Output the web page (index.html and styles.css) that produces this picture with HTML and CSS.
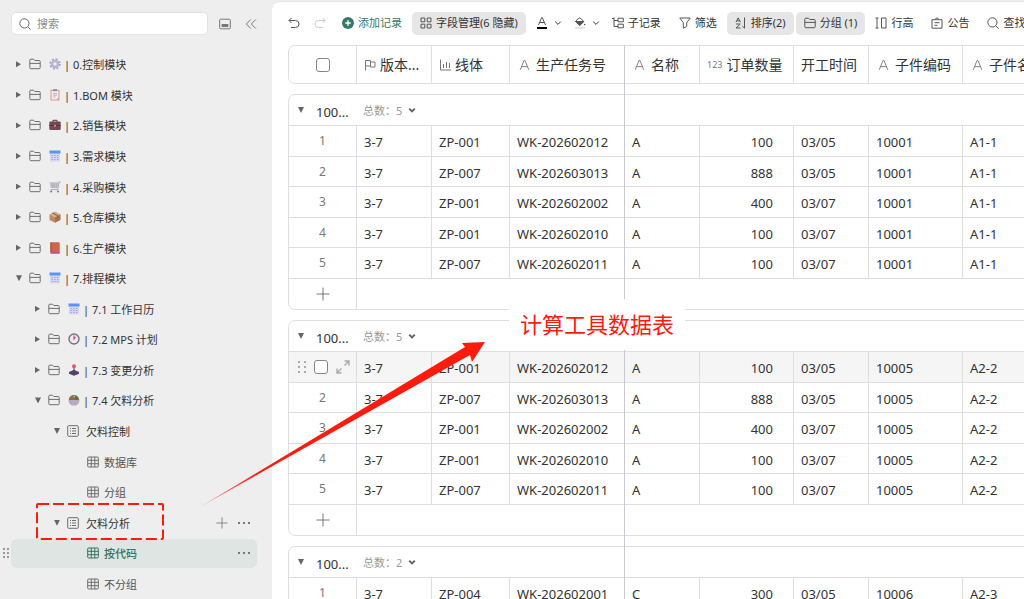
FILE: index.html
```html
<!DOCTYPE html>
<html lang="zh-CN">

<head>
    <meta charset="UTF-8">
    <title>欠料分析</title>
    <link rel="stylesheet" href="styles.css">
</head>

<body>

    <svg class="sprite" aria-hidden="true">
        <symbol id="i-search" viewBox="0 0 12 12"><circle cx="5.4" cy="5.4" r="4.6" /><path d="M8.800 8.800l2.800 2.800" /></symbol>
        <symbol id="i-folder" viewBox="0 0 12 12"><path d="M.8 9.700V2.200a1 1 0 0 1 1-1h2.700l1.300 1.300h4.400a1 1 0 0 1 1 1v6.200a1 1 0 0 1-1 1H1.800a1 1 0 0 1-1-1zM.8 5.400h10.400" /></symbol>
        <symbol id="i-list" viewBox="0 0 12 12"><rect x=".7" y=".7" width="10.6" height="10.6" rx="1" /><path d="M3 3.5h1M5 3.5h4M3 6h1M5 6h4M3 8.5h1M5 8.5h4" /></symbol>
        <symbol id="i-table" viewBox="0 0 12 12"><rect x=".7" y="1" width="10.6" height="10" rx="1" /><path d="M4.3 1v10M.7 4.3h10.6M.7 7.7h10.6M7.8 1v10" /></symbol>
        <symbol id="i-chevron" viewBox="0 0 8 8"><path d="M1.2 2.6L4 5.4l2.8-2.8" /></symbol>
        <symbol id="i-plus" viewBox="0 0 14 14"><path d="M7 .5v13M.5 7h13" /></symbol>
        <symbol id="i-text" viewBox="0 0 12 12"><path d="M1.3 11.3L5.5 1h1l4.2 10.3M2.8 7.8h6.4" /></symbol>
        <symbol id="i-calendar" viewBox="0 0 12 12"><path d="M1 3h10v8.500H1z" fill="#d9d6f1" stroke="none" /><path d="M.5.500h11v3H.5z" fill="#5b96ee" stroke="none" /><path d="M2.500 5.500h7M2.500 7.500h7M2.500 9.500h7" stroke="#9298cf" stroke-dasharray="1.200 1.600" /></symbol>
    </svg>

    <aside class="sidebar">
        <div class="sidebar-top">
            <label class="search">
                <svg class="icon"><use href="#i-search" /></svg>
                <input type="search" placeholder="搜索" aria-label="搜索">
            </label>
            <button class="plain" aria-label="面板">
                <svg class="icon" viewBox="0 0 12 12"><rect x=".7" y="1.2" width="10.6" height="9.6" rx="1" /><path d="M3 6.500h6v2H3z" fill="currentColor" /></svg>
            </button>
            <button class="plain collapse" aria-label="收起">
                <svg class="icon" viewBox="0 0 12 12"><path d="M5.800 1.500L1.300 6l4.500 4.500M10.800 1.500L6.300 6l4.500 4.500" /></svg>
            </button>
        </div>

        <ul class="tree">
            <li><a class="node" href="#"><i class="arrow"></i><svg class="icon"><use href="#i-folder" /></svg>
                <svg class="emoji" viewBox="0 0 12 12"><circle cx="6" cy="6" r="4.7" stroke="#aaa1c5" stroke-width="2" stroke-dasharray="2 1.7" /><circle cx="6" cy="6" r="3" stroke="#b9b1d3" stroke-width="2.4" /></svg>| 0.控制模块</a></li>
            <li><a class="node" href="#"><i class="arrow"></i><svg class="icon"><use href="#i-folder" /></svg>
                <svg class="emoji" viewBox="0 0 12 12"><path d="M1.5.8h9v10.7h-9z" fill="#d9a583" /><path d="M2.6 2h6.8v6.5L7.4 10.5H2.6z" fill="#f2edf7" /><path d="M4 .2h4v2H4z" fill="#8f87a5" /><path d="M4 4.5h4M4 6.2h4M4 8h2.5" stroke="#aaa2bc" stroke-width=".8" /></svg>| 1.BOM 模块</a></li>
            <li><a class="node" href="#"><i class="arrow"></i><svg class="icon"><use href="#i-folder" /></svg>
                <svg class="emoji" viewBox="0 0 12 12"><path d="M4 3V1.3h4V3" stroke="#4f3540" /><rect x=".3" y="2.6" width="11.4" height="8.4" rx="1" fill="#744753" /><path d="M.3 6.5h11.4" stroke="#573440" /><path d="M5 5.7h2v2H5z" fill="#d28a55" /></svg>| 2.销售模块</a></li>
            <li><a class="node" href="#"><i class="arrow"></i><svg class="icon"><use href="#i-folder" /></svg>
                <svg class="emoji"><use href="#i-calendar" /></svg>| 3.需求模块</a></li>
            <li><a class="node" href="#"><i class="arrow"></i><svg class="icon"><use href="#i-folder" /></svg>
                <svg class="emoji" viewBox="0 0 12 12"><path d="M11.8 1H10L8.8 8.6H1.5M.5 2h9M.9 4h8.4M1.3 6h7.7M2.8 2l.5 5M5 2v5M7.3 2L7 7" stroke="#9c9aa8" stroke-width=".8" /><circle cx="2.2" cy="10.5" r="1" fill="#6270ac" /><circle cx="9" cy="10.5" r="1" fill="#6270ac" /></svg>| 4.采购模块</a></li>
            <li><a class="node" href="#"><i class="arrow"></i><svg class="icon"><use href="#i-folder" /></svg>
                <svg class="emoji" viewBox="0 0 12 12"><path d="M6 .5l5.5 2.8L6 6.2.5 3.3z" fill="#d7ad83" /><path d="M.5 3.3L6 6.2v5.6L.5 9z" fill="#bf8c62" /><path d="M11.5 3.3L6 6.2v5.6L11.5 9z" fill="#a67150" /><path d="M3.3 1.9l5.5 2.8V7" stroke="#7f5948" /></svg>| 5.仓库模块</a></li>
            <li><a class="node" href="#"><i class="arrow"></i><svg class="icon"><use href="#i-folder" /></svg>
                <svg class="emoji" viewBox="0 0 12 12"><rect x="1.3" y=".3" width="9.4" height="11.4" rx=".8" fill="#cd6546" /><path d="M2 .3v10" stroke="#a74a43" /><path d="M2 10.7h8.7" stroke="#a95b8e" stroke-width="1.2" /></svg>| 6.生产模块</a></li>
            <li><a class="node" href="#"><i class="arrow open"></i><svg class="icon"><use href="#i-folder" /></svg>
                <svg class="emoji"><use href="#i-calendar" /></svg>| 7.排程模块</a></li>
            <li><a class="node level-2" href="#"><i class="arrow"></i><svg class="icon"><use href="#i-folder" /></svg>
                <svg class="emoji"><use href="#i-calendar" /></svg>| 7.1 工作日历</a></li>
            <li><a class="node level-2" href="#"><i class="arrow"></i><svg class="icon"><use href="#i-folder" /></svg>
                <svg class="emoji" viewBox="0 0 12 12"><circle cx="6" cy="6" r="5" fill="#eee9f1" stroke="#77707f" stroke-width="1.4" /><path d="M6 2.5V6l1.5-1.8" stroke="#d2455b" stroke-width="1.1" /></svg>| 7.2 MPS 计划</a></li>
            <li><a class="node level-2" href="#"><i class="arrow"></i><svg class="icon"><use href="#i-folder" /></svg>
                <svg class="emoji" viewBox="0 0 12 12"><path d="M6 3v4" stroke="#6d6280" stroke-width="1.3" /><circle cx="6" cy="2.2" r="2" fill="#e0586b" /><path d="M1 8l5-2.3L11 8v1.8l-5 2-5-2z" fill="#51426c" /></svg>| 7.3 变更分析</a></li>
            <li><a class="node level-2" href="#"><i class="arrow open"></i><svg class="icon"><use href="#i-folder" /></svg>
                <svg class="emoji" viewBox="0 0 12 12"><path d="M.8 6a5.2 5 0 0 1 10.4 0z" fill="#61814c" /><circle cx="4" cy="4" r="1.3" fill="#cc554e" /><circle cx="8.2" cy="4.3" r="1.2" fill="#8d4c44" /><circle cx="6.2" cy="2.7" r="1" fill="#a0b85d" /><path d="M.5 6h11c0 3.5-2 5.5-5.5 5.5S.5 9.5.5 6z" fill="#b5abc2" /></svg>| 7.4 欠料分析</a></li>
            <li><a class="node level-3" href="#"><i class="arrow open"></i><svg class="icon"><use href="#i-list" /></svg>欠料控制</a></li>
            <li><a class="node level-4" href="#"><svg class="icon"><use href="#i-table" /></svg>数据库</a></li>
            <li><a class="node level-4" href="#"><svg class="icon"><use href="#i-table" /></svg>分组</a></li>
            <li>
                <a class="node level-3" href="#"><i class="arrow open"></i><svg class="icon"><use href="#i-list" /></svg>欠料分析</a>
                <button class="plain" aria-label="新增"><svg class="icon"><use href="#i-plus" /></svg></button>
                <button class="plain more" aria-label="更多"><i class="dots"></i></button>
                <svg class="marker"><rect x="1" y="1" width="126" height="35" rx="1" /></svg>
            </li>
            <li class="selected">
                <svg class="grip" viewBox="0 0 6 10"><path d="M0 1h2M0 5h2M0 9h2M4 1h2M4 5h2M4 9h2" /></svg>
                <a class="node level-4" href="#"><svg class="icon"><use href="#i-table" /></svg>按代码</a>
                <button class="plain more" aria-label="更多"><i class="dots"></i></button>
            </li>
            <li><a class="node level-4" href="#"><svg class="icon"><use href="#i-table" /></svg>不分组</a></li>
        </ul>
    </aside>

    <main class="workspace">
        <div class="toolbar">
            <button class="tool icon-only" aria-label="撤销"><svg class="icon" viewBox="0 0 12 12"><path d="M3.5 1L1 3.5 3.5 6M1 3.5h6.5a3.5 3.5 0 0 1 0 7H3" /></svg></button>
            <button class="tool icon-only" aria-label="重做" disabled><svg class="icon" viewBox="0 0 12 12"><path d="M8.5 1L11 3.5 8.5 6M11 3.5H4.5a3.5 3.5 0 0 0 0 7H9" /></svg></button>
            <button class="tool add"><svg class="icon" viewBox="0 0 12 12"><circle cx="6" cy="6" r="6" fill="#39796a" stroke="none" /><path d="M6 3.3v5.4M3.3 6h5.4" stroke="#fff" stroke-width="1.4" /></svg>添加记录</button>
            <button class="tool active"><svg class="icon" viewBox="0 0 12 12"><path d="M1 1h3.8v3.8H1zM7.2 1H11v3.8H7.200zM1 7.200h3.800V11H1zM7.200 7.200H11V11H7.200z" /></svg>字段管理(6 隐藏)</button>
            <button class="tool color" aria-label="文字颜色"><svg class="icon" viewBox="0 0 12 12"><path d="M2.5 8L5.7.5h.6L9.5 8M3.7 5.5h4.6" /><path d="M1 11h10" stroke="#000" stroke-width="2" /></svg><svg class="chevron"><use href="#i-chevron" /></svg></button>
            <button class="tool color" aria-label="填充颜色"><svg class="icon" viewBox="0 0 12 12"><path d="M3.5 2.300L6 .7l3.800 3.800L5.700 8.400 1.500 4.500z" /><path d="M1.500 4.500h8.300L5.700 8.400z" fill="currentColor" /><circle cx="10.700" cy="7.500" r=".8" fill="currentColor" stroke="none" /><path d="M1 11h10" stroke="#ddd" stroke-width="1.600" /></svg><svg class="chevron"><use href="#i-chevron" /></svg></button>
            <button class="tool"><svg class="icon" viewBox="0 0 12 12"><path d="M0 1.500h2M2 .5v9h4M2 3.500h4M6 1.200h5.300v3.600H6zM6 7.200h5.300v3.600H6z" /></svg>子记录</button>
            <button class="tool"><svg class="icon" viewBox="0 0 12 12"><path d="M.8 1h10.400L7.700 5.800v3.700l-3.400 1.700V5.800z" /></svg>筛选</button>
            <button class="tool active"><svg class="icon" viewBox="0 0 12 12"><path d="M1 5.200L3.200.8l2.200 4.400M1.800 3.800h2.800M1 7h4.200L1 11h4.500M9.500.5v10.700L7.300 9" /></svg>排序(2)</button>
            <button class="tool active"><svg class="icon"><use href="#i-folder" /></svg>分组 (1)</button>
            <button class="tool"><svg class="icon" viewBox="0 0 12 12"><path d="M.5 1h3M.5 11h3M2 1v10M6.500 1h4.500v10H6.500z" /></svg>行高</button>
            <button class="tool"><svg class="icon" viewBox="0 0 12 12"><path d="M1 2.700h10v8.500H1zM4 2.500L6 .7l2 1.800M3.500 5.700h5M3.500 8.300h3" /></svg>公告</button>
            <button class="tool"><svg class="icon"><use href="#i-search" /></svg>查找</button>
        </div>

        <div class="sheet">
            <div class="group">
                <table class="grid head">
                    <thead>
                        <tr>
                            <th class="index"><input type="checkbox" aria-label="全选"></th>
                            <th class="w-75"><span><svg class="icon" viewBox="0 0 12 12"><path d="M1.500 11.500V1.500h5v5.500h-5M6.500 3h4.500v5H6.500V7" /></svg>版本...</span></th>
                            <th class="w-78"><span><svg class="icon" viewBox="0 0 12 12"><path d="M1.500.5v10.500H12M4.500 5v4M7.500 3v6M10.500 4v5" /></svg>线体</span></th>
                            <th class="w-115"><span class="text-type"><svg class="icon"><use href="#i-text" /></svg>生产任务号</span></th>
                            <th class="w-75"><span class="text-type"><svg class="icon"><use href="#i-text" /></svg>名称</span></th>
                            <th class="w-94"><span><small>123</small>订单数量</span></th>
                            <th class="w-75"><span>开工时间</span></th>
                            <th class="w-94"><span class="text-type"><svg class="icon"><use href="#i-text" /></svg>子件编码</span></th>
                            <th class="w-94"><span class="text-type"><svg class="icon"><use href="#i-text" /></svg>子件名称</span></th>
                        </tr>
                    </thead>
                </table>
            </div>
            <div class="frozen-line"></div>
        </div>

        <p class="note">计算工具数据表</p>
    </main>

    <svg class="pointer" viewBox="0 0 286 166" aria-hidden="true">
        <defs>
            <linearGradient id="fade"><stop offset="0" stop-color="#fd1b0d" stop-opacity=".4" /><stop offset=".2" stop-color="#fd1b0d" /></linearGradient>
        </defs>
        <path d="M0 165L265 5l-3-4 23-1-13 20-2-7z" fill="url(#fade)" />
    </svg>

    <template class="group-template">
        <section class="group">
            <div class="group-title">
                <button class="plain toggle" aria-label="折叠分组"><i class="arrow open"></i></button>
                <span class="group-name">100...</span>
                <button class="plain total"><span></span><svg class="chevron"><use href="#i-chevron" /></svg></button>
            </div>
            <table class="grid">
                <tbody></tbody>
            </table>
        </section>
    </template>

    <template class="row-template">
        <tr>
            <td class="index"></td>
            <td class="w-75"></td>
            <td class="w-78"></td>
            <td class="w-115"></td>
            <td class="w-75"></td>
            <td class="w-94 number"></td>
            <td class="w-75"></td>
            <td class="w-94"></td>
            <td class="w-94"></td>
        </tr>
    </template>

    <template class="hover-template">
        <div class="row-tools">
            <svg viewBox="0 0 8 14"><path d="M0 2h2M0 7h2M0 12h2M6 2h2M6 7h2M6 12h2" stroke-width="2" /></svg>
            <input type="checkbox" aria-label="选择记录">
            <svg viewBox="0 0 14 14"><path d="M8.5 1H13v4.5M13 1L8.5 5.5M5.5 13H1V8.5M1 13l4.5-4.5" stroke-width="1.4" /></svg>
        </div>
    </template>

    <template class="add-template">
        <tr class="add-row">
            <td class="index"><button class="plain" aria-label="添加记录"><svg class="icon"><use href="#i-plus" /></svg></button></td>
            <td colspan="8"></td>
        </tr>
    </template>

    <script>
        const orders = [
            ["ZP-001", "WK-202602012", "A", 100, "03/05"],
            ["ZP-007", "WK-202603013", "A", 888, "03/05"],
            ["ZP-001", "WK-202602002", "A", 400, "03/07"],
            ["ZP-001", "WK-202602010", "A", 100, "03/07"],
            ["ZP-007", "WK-202602011", "A", 100, "03/07"]
        ];
        const groups = [
            { code: "10001", part: "A1-1", total: 5, rows: orders },
            { code: "10005", part: "A2-2", total: 5, rows: orders, hover: 0 },
            { code: "10006", part: "A2-3", total: 2, rows: [["ZP-004", "WK-202602001", "C", 300, "03/05"]] }
        ];

        function clone(name) {
            return document.querySelector(name).content.cloneNode(true);
        }

        function showGroups() {
            const sheet = document.querySelector(".sheet");
            groups.forEach(group => {
                const section = clone(".group-template");
                const body = section.querySelector("tbody");
                section.querySelector(".total span").textContent = "总数：" + group.total;
                group.rows.forEach((order, i) => {
                    const row = clone(".row-template");
                    const values = [i + 1, "3-7", ...order, group.code, group.part];
                    row.querySelectorAll("td").forEach((cell, n) => cell.textContent = values[n]);
                    if (group.hover === i) {
                        row.querySelector("tr").classList.add("hover");
                        row.querySelector(".index").replaceChildren(clone(".hover-template"));
                    }
                    body.appendChild(row);
                });
                // only fully loaded groups end with the add row
                if (group.rows.length === group.total) {
                    body.appendChild(clone(".add-template"));
                }
                sheet.appendChild(section);
            });
        }

        showGroups();
    </script>

</body>

</html>
```

FILE: styles.css
```css
* {
    box-sizing: border-box;
}

body {
    margin: 0;
    height: 100vh;
    display: flex;
    overflow: hidden;
    background-color: #eeeeee;
    color: #333;
    font-family: "Noto Sans", "Noto Sans CJK SC", sans-serif;
    font-size: 11px;
}

button,
input {
    font: inherit;
    color: inherit;
}

svg {
    flex: none;
    fill: none;
    stroke: currentColor;
}

.sprite {
    position: absolute;
    width: 0;
    height: 0;
}

.icon {
    width: 12px;
    height: 12px;
    display: block;
}

.chevron {
    width: 8px;
    height: 8px;
}

.plain {
    padding: 0;
    border: 0;
    background: none;
    color: #777;
}

/* sidebar */

.sidebar {
    flex: none;
    width: 272px;
    display: flex;
    flex-direction: column;
}

.sidebar-top {
    display: flex;
    align-items: center;
    padding: 12px 15px 14px 11px;
}

.search {
    flex: 1;
    display: flex;
    align-items: center;
    gap: 6px;
    height: 23px;
    margin-right: 11px;
    padding: 0 7px;
    border: 1px solid #e3e3e3;
    border-radius: 5px;
    background-color: white;
    color: #666;
}

.search input {
    width: 100%;
    min-width: 0;
    padding: 0;
    border: 0;
    outline: 0;
    background: none;
}

.search input::placeholder {
    color: #8b8b8b;
}

.collapse {
    margin-left: 14px;
}

.tree {
    flex: 1;
    display: flex;
    flex-direction: column;
    margin: 0;
    padding: 0;
    list-style: none;
}

.tree li {
    flex: 1;
    position: relative;
    display: flex;
    align-items: center;
    margin: 0 15px 0 11px;
    padding-right: 7px;
    border: solid transparent;
    border-width: 1px 0;
    border-radius: 6px;
    background-clip: padding-box;
}

.tree .selected {
    background-color: #dee5e2;
}

.node {
    flex: 1;
    display: flex;
    align-items: center;
    padding-left: 4px;
    color: #333;
    text-decoration: none;
    white-space: nowrap;
}

.node .icon {
    margin-right: 8px;
    color: #6e6e6e;
}

.emoji {
    width: 12px;
    height: 12px;
    margin-right: 3px;
    stroke: none;
}

.level-2 {
    padding-left: 23px;
}

.level-3 {
    padding-left: 42px;
}

.level-4 {
    padding-left: 76px;
    color: #555;
}

.level-3 .icon {
    margin-right: 7px;
}

.level-4 .icon {
    margin-right: 5px;
}

.selected .node,
.selected .node .icon {
    color: #35735f;
}

.selected .node {
    font-weight: 500;
}

.arrow {
    flex: none;
    width: 8px;
    height: 6px;
    margin-right: 6px;
    background-color: #666;
    clip-path: polygon(1px 0, 6px 3px, 1px 6px);
}

.arrow.open {
    clip-path: polygon(1px 0, 7px 0, 4px 6px);
}

.more {
    margin-left: 10px;
}

.dots {
    display: block;
    width: 12px;
    height: 2px;
    background: repeating-linear-gradient(to right, #777 0 2px, transparent 2px 5px);
}

.grip {
    position: absolute;
    left: -8px;
    width: 6px;
    height: 10px;
    stroke: #999;
    stroke-width: 2;
}

.marker {
    position: absolute;
    left: 25px;
    top: -5px;
    width: 128px;
    height: 37px;
    z-index: 1;
    stroke: #fd1b0d;
    stroke-width: 2;
    stroke-dasharray: 11 4;
    pointer-events: none;
}

/* workspace */

.workspace {
    flex: 1;
    min-width: 0;
    position: relative;
    overflow: hidden;
    margin-top: 1px;
    padding-left: 16px;
    border-top: 1px solid #e6e6e6;
    border-top-left-radius: 8px;
    background-color: white;
}

.toolbar {
    display: flex;
    align-items: center;
    gap: 2px;
    height: 43px;
    margin-left: -6px;
    padding-bottom: 1px;
}

.tool {
    flex: none;
    display: flex;
    align-items: center;
    gap: 4px;
    height: 23px;
    padding: 0 8px;
    border: 0;
    border-radius: 5px;
    background: none;
    line-height: 14px;
    white-space: nowrap;
}

.tool .icon {
    color: #555;
}

.icon-only {
    padding: 0 6px;
}

.tool:disabled .icon {
    color: #ccc;
}

.add {
    color: #39796a;
}

.active {
    background-color: #e6e6e6;
}

.color {
    gap: 6px;
    padding: 0 2px 0 8px;
}

.sheet {
    position: relative;
    height: 100%;
    display: flex;
    flex-direction: column;
    gap: 10px;
}

.group {
    flex: none;
    width: max-content;
    overflow: hidden;
    border: 1px solid #dedede;
    border-radius: 7px;
}

.group-title {
    display: flex;
    align-items: center;
    height: 31px;
    padding-left: 8px;
    border-bottom: 1px solid #dedede;
}

.group-name {
    width: 47px;
    padding-top: 3px;
    font-size: 13px;
}

.toggle {
    margin-right: 11px;
}

.toggle .arrow {
    display: block;
    margin-right: 0;
}

.total {
    display: flex;
    align-items: center;
    gap: 6px;
    color: #999;
}

.total .chevron {
    color: #666;
    stroke-width: 2;
}

.grid {
    table-layout: fixed;
    width: 768px;
    border-spacing: 0;
    font-size: 13px;
}

.grid td,
.grid th {
    height: 31px;
    padding: 2px 7px 0;
    border-right: 1px solid #dedede;
    border-bottom: 1px solid #dedede;
    line-height: 20px;
    text-align: left;
    font-weight: 400;
    white-space: nowrap;
}

.grid tr:nth-child(even) td {
    height: 30px;
}

.grid .index {
    width: 68px;
    padding: 0;
    text-align: center;
    font-size: 12px;
    color: #777;
}

.w-75 {
    width: 75px;
}

.w-78 {
    width: 78px;
}

.w-94 {
    width: 94px;
}

.w-115 {
    width: 115px;
}

.grid .number {
    padding-right: 20px;
    text-align: right;
}

.grid .hover td {
    background-color: #f5f5f5;
}

.grid .add-row td {
    height: 30px;
    border-bottom: 0;
}

.add-row .plain {
    display: block;
    margin: auto;
}

.add-row .icon {
    width: 14px;
    height: 14px;
}

.grid.head th {
    height: 37px;
    padding-top: 0;
    border-bottom: 0;
    font-size: 14px;
}

.head span {
    display: flex;
    align-items: center;
    gap: 4px;
}

.head .text-type {
    gap: 6px;
    padding-left: 2px;
}

.head .text-type .icon {
    width: 11px;
}

.head .icon,
.head small {
    color: #777;
}

.head small {
    font-size: 9px;
}

input[type="checkbox"] {
    appearance: none;
    display: block;
    width: 14px;
    height: 14px;
    margin: auto;
    border: 1px solid #858585;
    border-radius: 3px;
    background-color: white;
}

.row-tools {
    display: flex;
    align-items: center;
    justify-content: space-between;
    padding: 0 6px 0 9px;
    color: #aaa;
}

.row-tools svg {
    width: 14px;
    height: 14px;
}

.row-tools svg:first-child {
    width: 8px;
}

.frozen-line {
    position: absolute;
    top: 0;
    bottom: 0;
    left: 336px;
    width: 1px;
    background-color: #c9c8d2;
}

/* annotation */

.note {
    position: absolute;
    left: 237px;
    top: 297px;
    margin: 0;
    padding: 10px 11px;
    background-color: white;
    color: #fd1b0d;
    font-size: 22px;
    line-height: 31px;
}

.pointer {
    position: absolute;
    left: 200px;
    top: 342px;
    width: 286px;
    height: 166px;
    stroke: none;
    pointer-events: none;
}
```
